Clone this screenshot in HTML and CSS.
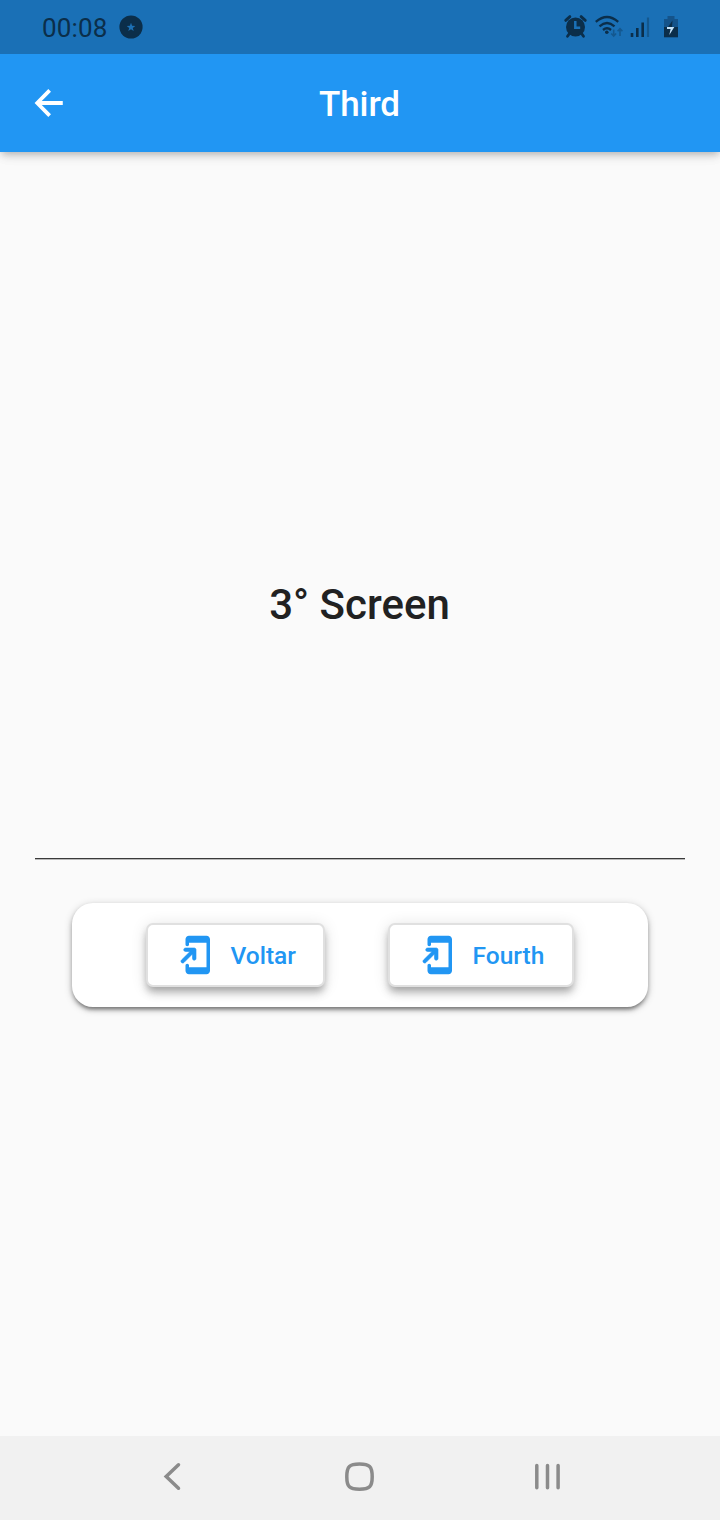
FILE: index.html
```html
<!DOCTYPE html>
<html lang="pt">
<head>
<meta charset="utf-8">
<title>Third</title>
<link rel="stylesheet" href="styles.css">
</head>
<body>
<div class="status">
  <span class="clock">00:08</span>
  <svg class="badge" width="24" height="24" viewBox="0 0 24 24"><circle cx="12" cy="12" r="11.6" fill="#0b2e4a"/><path d="M12 7.8l1.100 3 3.200.1-2.500 2 .9 3.100-2.700-1.800-2.700 1.800.9-3.100-2.500-2 3.200-.1z" fill="#1c70b5"/></svg>
  <svg class="tray" width="120" height="30" viewBox="562 12 120 30">
    <circle cx="575.500" cy="27" r="9.500" fill="#0b2e4a"/>
    <path d="M565.700 20.400l4.200-3.800M585.300 20.400l-4.200-3.800M569.500 33.500l-2 2.800M581.500 33.500l2 2.800" stroke="#0b2e4a" stroke-width="2.800" stroke-linecap="round"/>
    <path d="M575.300 21v6.800h4.900" fill="none" stroke="#1a70b6" stroke-width="2.500"/>
    <path d="M595.800 21.900q11.200-9.800 22.400 0M599.500 26.300q7.500-6.600 15 0M603 30q4-3.400 8 0" fill="none" stroke="#0b2e4a" stroke-width="2.300"/>
    <circle cx="606.800" cy="32.200" r="1.800" fill="#0b2e4a"/>
    <path d="M613.700 29.500v6.500M611.300 33.500l2.400 2.600 2.400-2.600M620 36v-7M617.600 31.300l2.400-2.600 2.400 2.600" fill="none" stroke="#14588f" stroke-width="1.600"/>
    <path d="M632 33v4M637.300 28v9M642.700 22.500v14.500" stroke="#0b2e4a" stroke-width="2.600"/>
    <path d="M648 17.500v19.500" stroke="#14588f" stroke-width="2.200"/>
    <path d="M667.500 16h7v3h3.500v8h-14v-8h3.500z" fill="#14538a"/>
    <path d="M664 27h14v10.300h-14z" fill="#0b2e4a"/>
    <path d="M672.500 20.500l-4.500 6.500h4z" fill="#0b2e4a"/>
    <path d="M667 27h7.300l-5 8 1.300-6h-3.600z" fill="#c5e3fa"/>
  </svg>
</div>
<header class="appbar">
  <svg class="back" width="42" height="42" viewBox="0 0 24 24"><path d="M19.300 12H5.500M11.800 4.800L4.700 12l7.100 7.200" fill="none" stroke="#fff" stroke-width="2.150"/></svg>
  <h1 class="title">Third</h1>
</header>
<main class="content">
  <h2 class="heading">3° Screen</h2>
  <hr class="divider">
  <section class="card">
    <button class="action action-back"><svg width="42" height="42" viewBox="0 0 24 24"><path d="M18 1.010L8 1c-1.100 0-2 .9-2 2v3c0 .55.45 1 1 1s1-.45 1-1V5h10v14H8v-1c0-.55-.45-1-1-1s-1 .45-1 1v3c0 1.100.9 2 2 2h10c1.100 0 2-.9 2-2V3c0-1.100-.9-1.990-2-1.990z"/><path class="arrow" d="M11 15c.55 0 1-.45 1-1V9c0-.55-.45-1-1-1H6c-.55 0-1 .45-1 1s.45 1 1 1h2.590L3.700 14.890c-.39.39-.39 1.020 0 1.410s1.020.39 1.410 0L10 11.410V14c0 .55.45 1 1 1z"/></svg><span>Voltar</span></button>
    <button class="action action-next"><svg width="42" height="42" viewBox="0 0 24 24"><path d="M18 1.010L8 1c-1.100 0-2 .9-2 2v3c0 .55.45 1 1 1s1-.45 1-1V5h10v14H8v-1c0-.55-.45-1-1-1s-1 .45-1 1v3c0 1.100.9 2 2 2h10c1.100 0 2-.9 2-2V3c0-1.100-.9-1.990-2-1.990z"/><path class="arrow" d="M11 15c.55 0 1-.45 1-1V9c0-.55-.45-1-1-1H6c-.55 0-1 .45-1 1s.45 1 1 1h2.590L3.700 14.890c-.39.39-.39 1.020 0 1.410s1.020.39 1.410 0L10 11.410V14c0 .55.45 1 1 1z"/></svg><span>Fourth</span></button>
  </section>
</main>
<nav class="navbar">
  <svg width="32" height="32" viewBox="0 0 32 32"><path d="M22.500 4.800L10.200 16.500l12.300 11.700" /></svg>
  <svg width="32" height="32" viewBox="0 0 32 32"><path d="M15.500 4C25.500 4 28.200 6.500 28.200 16.700s-2.700 12.600-12.700 12.600S2.800 27 2.800 16.700 5.500 4 15.500 4z"/></svg>
  <svg width="32" height="32" viewBox="0 0 32 32"><path d="M4.800 5.400v22.400M15.500 5.400v22.400M26.100 5.400v22.400"/></svg>
</nav>
</body>
</html>
```
FILE: styles.css
```css
* { box-sizing: border-box; }
body {
  margin: 0;
  height: 1520px;
  display: flex;
  flex-direction: column;
  background: #fafafa;
  font-family: Roboto, "Liberation Sans", sans-serif;
}
.status {
  position: relative;
  z-index: 1;
  height: 54px;
  flex: none;
  display: flex;
  align-items: center;
  padding: 0 38px 0 42px;
  background: #1a70b6;
}
.clock { font-size: 26px; line-height: 30px; letter-spacing: .15px; color: #0b2e4a; padding-top: 2px; }
.badge { margin: 0 0 0 11.500px; }
.tray { margin-left: auto; }
.appbar {
  height: 98px;
  flex: none;
  display: grid;
  grid-template-columns: 42px 1fr 42px;
  align-items: center;
  padding: 0 28px;
  background: #2196f3;
  box-shadow: 0 3px 7px -1.500px rgba(0,0,0,.2), 0 5px 9px rgba(0,0,0,.08), 0 2px 15px rgba(0,0,0,.06);
}
.back { margin-left: 1px; }
.title {
  margin: 0;
  padding: 3px 1px 0 0;
  text-align: center;
  font-size: 35px;
  font-weight: 500;
  line-height: 43px;
  letter-spacing: -.1px;
  color: #fff;
}
.content { flex: 1; display: flex; flex-direction: column; }
.heading {
  margin: 428px 0 0;
  padding-right: 1px;
  text-align: center;
  font-size: 42px;
  font-weight: 500;
  line-height: 50px;
  color: #212121;
}
.divider {
  width: 650px;
  height: 2px;
  margin: 228px auto 0;
  border: 0;
  border-top: 1px solid #3a3a3a;
  border-bottom: 1px solid #b9b9b9;
}
.card {
  width: 576px;
  height: 104.500px;
  margin: 42.500px auto 0;
  padding: 20.500px 74px 0;
  display: flex;
  align-items: flex-start;
  justify-content: space-between;
  background: #fff;
  border-radius: 21px;
  box-shadow: 0 5px 3px -3px rgba(0,0,0,.2), 0 3px 4px rgba(0,0,0,.28), 0 2px 9px rgba(0,0,0,.2);
}
.action {
  height: 64px;
  display: flex;
  align-items: center;
  padding: 0 0 1px 26.500px;
  border: 2px solid #e0e0e0;
  border-radius: 7px;
  background: #fff;
  color: #2196f3;
  font: 500 24.500px/30px Roboto, sans-serif;
  box-shadow: 0 5px 7px -2px rgba(0,0,0,.2), 0 7px 9px rgba(0,0,0,.14), 0 2px 16px rgba(0,0,0,.12);
}
.action svg { fill: currentColor; margin-right: 14px; }
.action .arrow { stroke: currentColor; stroke-width: .35; }
.action span { padding-top: 3px; }
.action-back { width: 179px; }
.action-next { width: 186px; }
.navbar {
  height: 84px;
  flex: none;
  display: flex;
  justify-content: space-between;
  align-items: center;
  padding: 0 156px 4px;
  background: #f1f1f1;
}
.navbar svg { fill: none; stroke: #8b8b8b; stroke-width: 3.500; stroke-linecap: round; }
```
